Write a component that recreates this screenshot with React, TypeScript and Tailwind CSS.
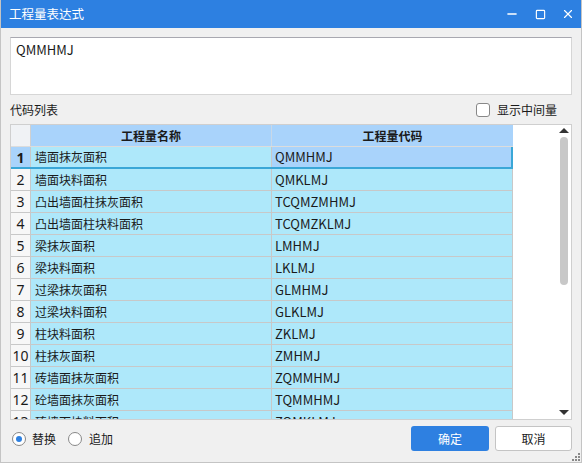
import { Minus, Square, X } from 'lucide-react';

const rows: [string, string][] = [
    ['墙面抹灰面积', 'QMMHMJ'],
    ['墙面块料面积', 'QMKLMJ'],
    ['凸出墙面柱抹灰面积', 'TCQMZMHMJ'],
    ['凸出墙面柱块料面积', 'TCQMZKLMJ'],
    ['梁抹灰面积', 'LMHMJ'],
    ['梁块料面积', 'LKLMJ'],
    ['过梁抹灰面积', 'GLMHMJ'],
    ['过梁块料面积', 'GLKLMJ'],
    ['柱块料面积', 'ZKLMJ'],
    ['柱抹灰面积', 'ZMHMJ'],
    ['砖墙面抹灰面积', 'ZQMMHMJ'],
    ['砼墙面抹灰面积', 'TQMMHMJ'],
    ['砖墙面块料面积', 'ZQMKLMJ'],
];

const font = { fontFamily: '"Noto Sans CJK SC", "Noto Sans", sans-serif' };

export default function App() {
    return (
        <div
            className="w-[582px] h-[463px] bg-[#f0f0f0] border-x border-b border-[#c4c4c4] flex flex-col text-[12px] text-[#1a1a1a] overflow-hidden relative"
            style={font}
        >
            {/* Title bar */}
            <div className="h-[28px] shrink-0 bg-[#2d80e1] -mx-px flex items-center pl-[9px] text-white">
                <span className="text-[12.5px] leading-none">工程量表达式</span>
                <div className="ml-auto flex items-center">
                    <div className="w-[28px] flex justify-center">
                        <Minus size={14} strokeWidth={2.5} />
                    </div>
                    <div className="w-[28px] flex justify-center">
                        <Square size={11} strokeWidth={2.5} />
                    </div>
                    <div className="w-[28px] flex justify-center">
                        <X size={14} strokeWidth={2} />
                    </div>
                </div>
            </div>

            <div className="flex flex-col px-[9px] flex-1">
                {/* Expression box */}
                <div className="mt-[9px] h-[58px] bg-white border border-[#d6d6d6] border-t-[#a8a8b0] px-[5px] pt-[2px] text-[13px]">
                    QMMHMJ
                </div>

                {/* Label row */}
                <div className="h-[29px] flex items-center">
                    <span>代码列表</span>
                    <label className="ml-auto mr-[15px] flex items-center gap-[7px]">
                        <span className="w-[14px] h-[14px] bg-white border border-[#888] rounded-[3px]" />
                        <span>显示中间量</span>
                    </label>
                </div>

                {/* Table */}
                <div className="h-[296px] bg-white border border-[#cfcfcf] flex overflow-hidden">
                    <div className="w-[502px] shrink-0">
                        <div className="h-[22px] flex border-b border-[#dcdcdc] font-bold">
                            <div className="w-[20px] bg-[#f0f2f5] border-r border-[#d0d0d0]" />
                            <div className="w-[241px] bg-[#a9d3fb] border-r border-[#c8d8e8] flex items-center justify-center">
                                工程量名称
                            </div>
                            <div className="w-[241px] bg-[#a9d3fb] flex items-center justify-center">工程量代码</div>
                        </div>
                        {rows.map(([name, code], i) => {
                            const sel = i === 0;
                            return (
                                <div
                                    key={code}
                                    className={
                                        sel
                                            ? 'h-[22px] flex border-b-2 border-[#3aa7d7]'
                                            : 'h-[22px] flex border-b border-[#c8c8c8]'
                                    }
                                >
                                    <div
                                        className={
                                            sel
                                                ? 'w-[20px] bg-[#a9d3fb] border-r border-[#c8c8c8] flex items-center justify-center font-bold text-[14px]'
                                                : 'w-[20px] bg-[#f7f7f7] border-r border-[#c8c8c8] flex items-center justify-center text-[14px]'
                                        }
                                        style={{ fontFamily: '"Noto Sans", sans-serif' }}
                                    >
                                        {i + 1}
                                    </div>
                                    <div className="w-[241px] bg-[#aee8fa] border-r border-[#c8c8c8] flex items-center pl-[4px]">
                                        {name}
                                    </div>
                                    <div
                                        className={
                                            sel
                                                ? 'w-[241px] bg-[#a9d3fb] border-r-2 border-[#3aa7d7] flex items-center pl-[3px] text-[13px]'
                                                : 'w-[241px] bg-[#aee8fa] border-r border-[#c8c8c8] flex items-center pl-[3px] text-[13px]'
                                        }
                                    >
                                        {code}
                                    </div>
                                </div>
                            );
                        })}
                    </div>
                    {/* Scrollbar */}
                    <div className="flex-1 flex justify-end pr-[3px]">
                        <div className="w-[8px] flex flex-col items-center">
                            <div className="mt-[3px] w-0 h-0 border-x-[5px] border-x-transparent border-b-[5px] border-b-[#333]" />
                            <div className="mt-[4px] w-[8px] h-[148px] bg-[#c8c8c8] rounded-full" />
                            <div className="mt-auto mb-[4px] w-0 h-0 border-x-[5px] border-x-transparent border-t-[5px] border-t-[#333]" />
                        </div>
                    </div>
                </div>

                {/* Bottom bar */}
                <div className="flex items-center mt-[6px]">
                    <label className="flex items-center gap-[6px] ml-[2px]">
                        <span className="w-[14px] h-[14px] rounded-full bg-white border border-[#888] flex items-center justify-center">
                            <span className="w-[6px] h-[6px] rounded-full bg-[#2d80e1]" />
                        </span>
                        <span>替换</span>
                    </label>
                    <label className="flex items-center gap-[7px] ml-[12px]">
                        <span className="w-[14px] h-[14px] rounded-full bg-white border border-[#888]" />
                        <span>追加</span>
                    </label>
                    <button className="ml-auto w-[78px] h-[25px] bg-[#2e80e1] text-white rounded-[3px]">确定</button>
                    <button className="ml-[6px] w-[77px] h-[25px] bg-white border border-[#c4c4c4] rounded-[3px]">取消</button>
                </div>
            </div>

            {/* Resize grip */}
            <svg className="absolute right-[1px] bottom-[1px]" width="8" height="8" viewBox="0 0 8 8">
                <rect x="6" y="0" width="2" height="2" fill="#888" />
                <rect x="3" y="3" width="2" height="2" fill="#888" />
                <rect x="6" y="3" width="2" height="2" fill="#888" />
                <rect x="0" y="6" width="2" height="2" fill="#888" />
                <rect x="3" y="6" width="2" height="2" fill="#888" />
                <rect x="6" y="6" width="2" height="2" fill="#888" />
            </svg>
        </div>
    );
}
